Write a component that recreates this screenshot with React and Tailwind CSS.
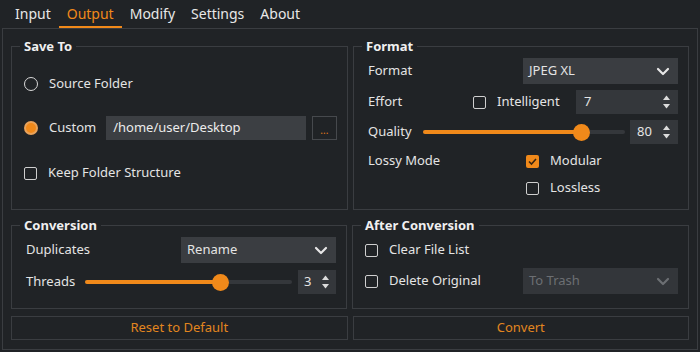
import { useState } from "react";

const ORANGE = "bg-[#f0891a]";

function Chevron({ muted }) {
  return (
    <svg width="14" height="9" viewBox="0 0 14 9" className="shrink-0">
      <path
        d="M2 2l5 5 5-5"
        fill="none"
        stroke={muted ? "#6c6f73" : "#e6e6e6"}
        strokeWidth="2.2"
        strokeLinecap="round"
        strokeLinejoin="round"
      />
    </svg>
  );
}

function SpinArrows() {
  return (
    <svg width="9" height="16" viewBox="0 0 9 16" className="shrink-0">
      <path d="M4.5 1.5L8 6H1z" fill="#dcdcdc" />
      <path d="M4.5 14.5L8 10H1z" fill="#dcdcdc" />
    </svg>
  );
}

function Checkbox({ checked, label }) {
  return (
    <div className="flex items-center gap-[11px]">
      {checked ? (
        <span className="w-[13px] h-[13px] rounded-[2px] bg-[#f0891a] flex items-center justify-center">
          <svg width="11" height="11" viewBox="0 0 11 11">
            <path d="M2 5.5l2.5 2.5L9 3" fill="none" stroke="#3a2510" strokeWidth="1.6" />
          </svg>
        </span>
      ) : (
        <span className="w-[13px] h-[13px] rounded-[2px] border-[1.5px] border-[#cfcfcf]" />
      )}
      <span>{label}</span>
    </div>
  );
}

function Radio({ checked, label }) {
  return (
    <div className="flex items-center gap-[11px]">
      {checked ? (
        <span className="w-[14px] h-[14px] rounded-full border-[2px] border-[#e9a25a] bg-[#f0891a]" />
      ) : (
        <span className="w-[14px] h-[14px] rounded-full border-[1.5px] border-[#d8d8d8]" />
      )}
      <span>{label}</span>
    </div>
  );
}

function Slider({ pct }) {
  return (
    <div className="relative flex-1 h-[16px] flex items-center">
      <div className="w-full h-[4px] rounded-full bg-[#34373b]" />
      <div
        className={`absolute left-0 h-[4px] rounded-full ${ORANGE}`}
        style={{ width: `${pct}%` }}
      />
      <div
        className="absolute w-[17px] h-[17px] -ml-[8px] rounded-full bg-[#f0891a]"
        style={{ left: `${pct}%` }}
      />
    </div>
  );
}

function Group({ title, className, children }) {
  return (
    <div className={`relative border border-[#3a3d41] ${className}`}>
      <span className="absolute -top-[9px] left-[8px] px-[4px] bg-[#202326] font-bold text-[13px] leading-[16px] text-[#f0f0f0]">
        {title}
      </span>
      {children}
    </div>
  );
}

export default function App() {
  const [tab] = useState("Output");
  const tabs = ["Input", "Output", "Modify", "Settings", "About"];

  return (
    <div
      className="w-[700px] h-[352px] bg-[#202326] text-[#e4e4e4] text-[13px] overflow-hidden"
      style={{ fontFamily: '"Noto Sans", "Open Sans", sans-serif' }}
    >
      {/* Tabs */}
      <div className="h-[28px] flex items-end pl-[7px] gap-[0px]">
        {tabs.map((t) => (
          <div
            key={t}
            className={`h-[28px] px-[8px] flex items-center text-[14px] border-b-[2px] ${
              t === tab ? "text-[#f0891a] border-[#f0891a]" : "border-transparent text-[#e8e8e8]"
            }`}
          >
            {t}
          </div>
        ))}
      </div>

      {/* Frame */}
      <div className="mx-[2px] h-[322px] border border-[#3a3d41] px-[8px] pt-[17px] flex flex-col">
        <div className="flex gap-[5px]">
          <Group title="Save To" className="w-[337px] h-[164px] pl-[12px] pr-[10px] pt-[25px]">
            <div className="flex flex-col">
              <div className="h-[24px] flex items-center">
                <Radio label="Source Folder" />
              </div>
              <div className="h-[24px] mt-[20px] flex items-center">
                <Radio checked label="Custom" />
                <div className="ml-[10px] w-[205px] h-[24px] bg-[#3c3f43] flex items-center px-[7px] text-[#ececec]">
                  /home/user/Desktop
                </div>
                <div className="ml-[6px] w-[26px] h-[24px] border border-[#46494d] flex items-center justify-center text-[#e07a1a] text-[10px] leading-none pt-[4px]">
                  ...
                </div>
              </div>
              <div className="h-[24px] mt-[21px] flex items-center">
                <Checkbox label="Keep Folder Structure" />
              </div>
            </div>
          </Group>

          <Group title="Format" className="w-[337px] h-[164px] pl-[14px] pr-[10px] pt-[11px]">
            <div className="flex flex-col">
              <div className="h-[26px] flex items-center">
                <span className="flex-1">Format</span>
                <div className="w-[155px] h-[26px] bg-[#3a3d41] flex items-center justify-between pl-[6px] pr-[8px]">
                  <span>JPEG XL</span>
                  <Chevron />
                </div>
              </div>
              <div className="h-[24px] mt-[6px] flex items-center">
                <span className="w-[105px]">Effort</span>
                <Checkbox label="Intelligent" />
                <div className="ml-auto w-[102px] h-[24px] bg-[#34373b] flex items-center justify-between pl-[8px] pr-[7px]">
                  <span>7</span>
                  <SpinArrows />
                </div>
              </div>
              <div className="h-[24px] mt-[6px] flex items-center">
                <span className="w-[55px]">Quality</span>
                <Slider pct={78} />
                <div className="ml-[5px] w-[48px] h-[24px] bg-[#34373b] flex items-center justify-between pl-[7px] pr-[7px]">
                  <span>80</span>
                  <SpinArrows />
                </div>
              </div>
              <div className="h-[20px] mt-[7px] flex items-center">
                <span className="w-[158px]">Lossy Mode</span>
                <Checkbox checked label="Modular" />
              </div>
              <div className="h-[20px] mt-[7px] flex items-center pl-[158px]">
                <Checkbox label="Lossless" />
              </div>
            </div>
          </Group>
        </div>

        <div className="flex gap-[5px] mt-[15px]">
          <Group title="Conversion" className="w-[337px] h-[84px] pl-[14px] pr-[10px] pt-[11px]">
            <div className="h-[26px] flex items-center">
              <span className="flex-1">Duplicates</span>
              <div className="w-[155px] h-[26px] bg-[#3a3d41] flex items-center justify-between pl-[6px] pr-[8px]">
                <span>Rename</span>
                <Chevron />
              </div>
            </div>
            <div className="h-[24px] mt-[7px] flex items-center">
              <span className="w-[59px]">Threads</span>
              <Slider pct={65} />
              <div className="ml-[6px] w-[38px] h-[24px] bg-[#34373b] flex items-center justify-between pl-[6px] pr-[6px]">
                <span>3</span>
                <SpinArrows />
              </div>
            </div>
          </Group>

          <Group title="After Conversion" className="w-[337px] h-[84px] pl-[12px] pr-[10px] pt-[11px]">
            <div className="h-[26px] flex items-center">
              <Checkbox label="Clear File List" />
            </div>
            <div className="h-[26px] mt-[5px] flex items-center">
              <div className="w-[158px]">
                <Checkbox label="Delete Original" />
              </div>
              <div className="w-[155px] h-[26px] bg-[#33363a] flex items-center justify-between pl-[6px] pr-[8px] text-[#6c6f73]">
                <span>To Trash</span>
                <Chevron muted />
              </div>
            </div>
          </Group>
        </div>

        <div className="flex gap-[5px] mt-[7px]">
          <button className="w-[337px] h-[24px] border border-[#3a3d41] text-[#e2861f] text-[13px]">
            Reset to Default
          </button>
          <button className="w-[337px] h-[24px] border border-[#3a3d41] text-[#e2861f] text-[13px]">
            Convert
          </button>
        </div>
      </div>
    </div>
  );
}
